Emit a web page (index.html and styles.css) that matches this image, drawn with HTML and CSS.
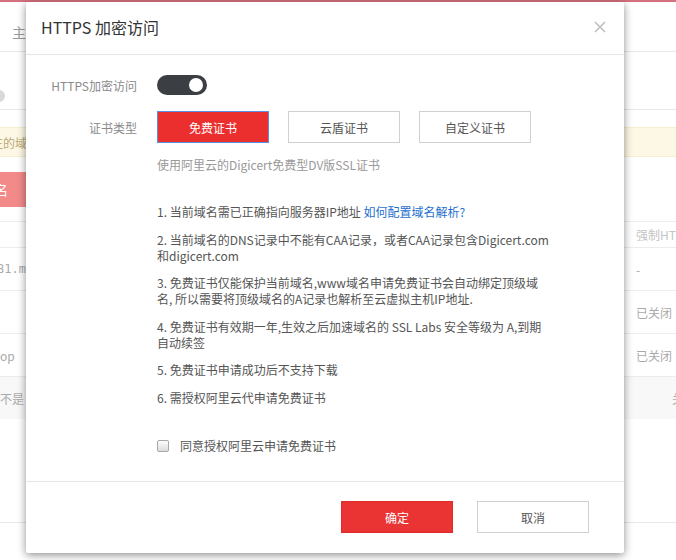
FILE: index.html
```html
<!DOCTYPE html>
<html lang="zh-CN">
<head>
<meta charset="utf-8">
<title>HTTPS 加密访问</title>
<link rel="stylesheet" href="styles.css">
</head>
<body>
<div class="page">
  <div class="topbar"></div>
  <div class="pg-head"><span class="pg-title">主机管理</span></div>
  <div class="pg-tools"><span class="pg-circle"></span></div>
  <div class="pg-notice"><span>注的域名</span></div>
  <div class="pg-actions"><span class="pg-btn">域名</span></div>
  <div class="pg-table">
    <div class="pg-row pg-row-head"><span class="c1"></span><span class="c2">强制HTTPS</span></div>
    <div class="pg-row pg-row-tall"><span class="c1 mono">x281.m</span><span class="c2">-</span></div>
    <div class="pg-row pg-row-tall"><span class="c1"></span><span class="c2">已关闭</span></div>
    <div class="pg-row pg-row-tall"><span class="c1">op</span><span class="c2">已关闭</span></div>
    <div class="pg-row pg-row-tall pg-row-gray"><span class="c1">不是</span><span class="c2 c2-far">关</span></div>
  </div>
  <div class="pg-pager"></div>
</div>

<div class="modal">
  <div class="modal-head">
    <span class="modal-title">HTTPS 加密访问</span>
    <span class="modal-close">
      <svg width="12" height="12" viewBox="0 0 12 12"><path d="M1 1L11 11M11 1L1 11" stroke="#c0c0c0" stroke-width="1.6" fill="none"/></svg>
    </span>
  </div>
  <div class="modal-body">
    <div class="form-row">
      <span class="form-label">HTTPS加密访问</span>
      <span class="toggle"><span class="knob"></span></span>
    </div>
    <div class="form-row form-row-btns">
      <span class="form-label">证书类型</span>
      <div class="cert-btns">
        <span class="cbtn cbtn-active">免费证书</span>
        <span class="cbtn">云盾证书</span>
        <span class="cbtn">自定义证书</span>
      </div>
    </div>
    <div class="desc">使用阿里云的Digicert免费型DV版SSL证书</div>
    <ol class="notes">
      <li>1. 当前域名需已正确指向服务器IP地址 <span class="link">如何配置域名解析?</span></li>
      <li>2. 当前域名的DNS记录中不能有CAA记录，或者CAA记录包含Digicert.com和digicert.com</li>
      <li>3. 免费证书仅能保护当前域名,www域名申请免费证书会自动绑定顶级域名, 所以需要将顶级域名的A记录也解析至云虚拟主机IP地址.</li>
      <li>4. 免费证书有效期一年,生效之后加速域名的 SSL Labs 安全等级为 A,到期自动续签</li>
      <li>5. 免费证书申请成功后不支持下载</li>
      <li>6. 需授权阿里云代申请免费证书</li>
    </ol>
    <label class="agree"><span class="chk"></span><span>同意授权阿里云申请免费证书</span></label>
  </div>
  <div class="modal-foot">
    <span class="fbtn fbtn-primary">确定</span>
    <span class="fbtn">取消</span>
  </div>
</div>
</body>
</html>
```

FILE: styles.css
```css
* { box-sizing: border-box; }
html, body { margin: 0; padding: 0; }
body {
  width: 676px;
  height: 560px;
  overflow: hidden;
  position: relative;
  background: #ffffff;
  font-family: "Noto Sans CJK SC", "Open Sans", sans-serif;
  font-size: 12px;
  color: #666;
}

/* background page */
.page { width: 676px; }
.topbar { height: 2px; background: #d5707e; }
.pg-head {
  height: 50px;
  border-bottom: 1px solid #e8e8e8;
  display: flex;
  align-items: center;
  padding-left: 12px;
  padding-top: 10px;
}
.pg-title { font-size: 14px; color: #999; }
.pg-tools {
  height: 58px;
  border-bottom: 1px solid #e8e8e8;
  display: flex;
  align-items: flex-end;
  padding-bottom: 7px;
}
.pg-circle {
  width: 12px; height: 12px; border-radius: 50%;
  background: #d9d9d9;
  margin-left: -7px;
}
.pg-notice {
  margin-top: 17px;
  height: 30px;
  background: #fdf8e6;
  border-top: 1px solid #f6eed0;
  border-bottom: 1px solid #f6eed0;
  display: flex;
  align-items: center;
  color: #bba877;
}
.pg-notice span { margin-left: -9px; }
.pg-actions { margin-top: 15px; height: 35px; }
.pg-btn {
  display: flex; align-items: center; justify-content: flex-end;
  width: 26px; height: 35px;
  background: #f28a8a;
  color: #fff;
  font-size: 13px;
  overflow: hidden;
  white-space: nowrap;
  padding-right: 18px;
}
.pg-table { margin-top: 14px; }
.pg-row {
  display: flex;
  justify-content: space-between;
  align-items: center;
  border-top: 1px solid #ececec;
  color: #aaa;
}
.pg-row-head { height: 26px; color: #c4c4c4; }
.pg-row-tall { height: 43px; }
.pg-row-gray { background: #f8f8f8; }
.c1 { width: 40px; overflow: hidden; white-space: nowrap; direction: rtl; text-align: left; padding-right: 14px; }
.mono { font-family: "DejaVu Sans Mono", monospace; font-size: 12px; direction: rtl; }
.c2 { width: 40px; white-space: nowrap; overflow: hidden; }
.c2-far { padding-left: 36px; }
.pg-pager { margin-top: 103px; border-top: 1px solid #e8e8e8; }

/* modal */
.modal {
  position: absolute;
  left: 26px;
  top: 2px;
  width: 598px;
  height: 551px;
  background: #fff;
  border-radius: 2px;
  box-shadow: 0 2px 8px rgba(0,0,0,0.45);
  display: flex;
  flex-direction: column;
}
.modal-head {
  height: 53px;
  border-bottom: 1px solid #e5e5e5;
  display: flex;
  align-items: center;
  justify-content: space-between;
  padding: 0 18px 0 15px;
}
.modal-title { font-size: 16px; color: #333; margin-top: -3px; }
.modal-close { display: flex; margin-top: -2px; }

.modal-body {
  flex: 1;
  padding: 20px 0 0 0;
}
.form-row {
  display: flex;
  align-items: center;
  height: 20px;
}
.form-label {
  width: 111px;
  text-align: right;
  color: #8a8a8a;
  margin-right: 20px;
  white-space: nowrap;
}
.toggle {
  width: 50px; height: 20px; border-radius: 10px;
  background: #3b3e43;
  display: flex; align-items: center; justify-content: flex-end;
  padding-right: 4px;
}
.knob { width: 14px; height: 14px; border-radius: 50%; background: #fff; }

.form-row-btns { height: 32px; margin-top: 16px; }
.cert-btns { display: flex; gap: 19px; }
.cbtn {
  width: 112px; height: 32px;
  border: 1px solid #d0d0d0;
  display: flex; align-items: center; justify-content: center;
  color: #555;
  background: #fff;
}
.cbtn-active {
  background: #eb2f2f;
  border-color: #5b8fe6;
  color: #fff;
}
.desc {
  margin: 14px 0 0 131px;
  line-height: 16px;
  color: #999;
}
.notes {
  list-style: none;
  margin: 31px 0 0 131px;
  padding: 0;
  width: 392px;
  color: #555;
}
.notes li { line-height: 16px; margin-bottom: 11.6px; }
.link { color: #1e6fd0; }

.agree {
  display: flex;
  align-items: center;
  gap: 11px;
  margin: 32px 0 0 131px;
  color: #555;
  line-height: 16px;
}
.chk {
  width: 12px; height: 12px;
  border: 1px solid #a8a8a8;
  border-radius: 2px;
  background: linear-gradient(#fdfdfd, #dcdcdc);
}

.modal-foot {
  height: 72px;
  border-top: 1px solid #e5e5e5;
  display: flex;
  justify-content: flex-end;
  gap: 24px;
  padding: 19px 35px 0 0;
}
.fbtn {
  width: 112px; height: 32px;
  border: 1px solid #d0d0d0;
  display: flex; align-items: center; justify-content: center;
  color: #555;
  background: #fff;
}
.fbtn-primary { background: #ea3333; border-color: #e02a2a; color: #fff; }
```
